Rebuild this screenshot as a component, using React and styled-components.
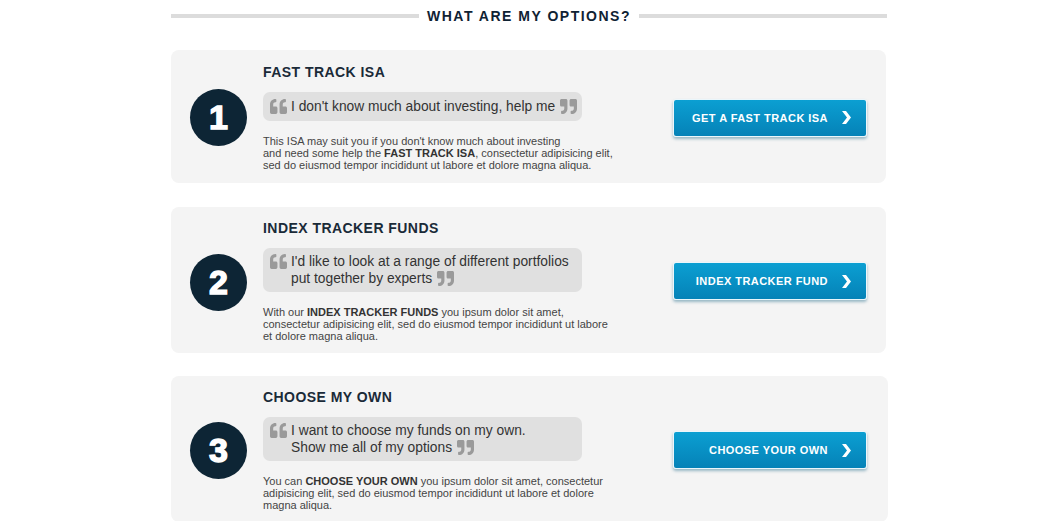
import React from 'react'
import styled, { createGlobalStyle } from 'styled-components'
import { FaQuoteLeft, FaQuoteRight } from 'react-icons/fa'

const GlobalStyle = createGlobalStyle`
body {
  margin: 0;
  background: #ffffff;
  font-family: "Liberation Sans", Arial, sans-serif;
}
`

const Page = styled.div`
width: 1058px;
padding: 7px 0 0 171px;
box-sizing: border-box;
`

const Heading = styled.div`
width: 716px;
display: flex;
align-items: center;
gap: 8px;
height: 18px;
margin-bottom: 25px;
`

const Rule = styled.div`
flex: 1;
height: 4px;
background: #dcdcdc;
`

const HeadingText = styled.h2`
margin: 0;
font-size: 14px;
font-weight: 700;
letter-spacing: 1.5px;
color: #0f2233;
white-space: nowrap;
`

const Card = styled.div`
width: ${p => p.$width || 715}px;
min-height: ${p => p.$height}px;
box-sizing: border-box;
background: #f4f4f4;
border-radius: 8px;
display: grid;
grid-template-columns: 92px 1fr auto;
align-items: center;
padding: 13px ${p => (p.$width ? p.$width - 696 : 19)}px 11px 0;
margin-bottom: ${p => p.$gap}px;
`

const Circle = styled.div`
width: 57px;
height: 57px;
border-radius: 50%;
background: #0d2535;
color: #ffffff;
display: flex;
align-items: center;
justify-content: center;
font-size: 34px;
font-weight: 700;
-webkit-text-stroke: 1.4px #ffffff;
justify-self: end;
margin-right: 16px;
margin-top: ${p => p.$shift || 0}px;
`

const Body = styled.div`
display: flex;
flex-direction: column;
`

const Title = styled.h3`
margin: 0 0 12px 0;
font-size: 14px;
font-weight: 700;
letter-spacing: 0.45px;
color: #1a2a38;
line-height: 16px;
`

const QuoteBox = styled.div`
width: 319px;
box-sizing: border-box;
background: #e0e0e0;
border-radius: 7px;
padding: ${p => (p.$lines > 1 ? '5px 8px 5px 7px' : '6px 8px 6px 7px')};
display: flex;
align-items: flex-start;
gap: 4px;
font-size: 13.8px;
line-height: 17px;
color: #333333;
margin-bottom: 14px;
white-space: nowrap;
`

const QuoteMark = styled.span`
color: #9a9a9a;
display: inline-flex;
align-items: center;
height: 17px;
font-size: 17px;
svg {
  width: 17px;
  height: 17px;
}
`

const CloseMark = styled(QuoteMark)`
margin-left: 5px;
vertical-align: top;
`

const QuoteText = styled.span``

const Desc = styled.p`
margin: 0;
font-size: 11px;
line-height: 12px;
color: #444444;
b {
  color: #333333;
}
`

const Button = styled.button`
width: 194px;
height: 38px;
box-sizing: border-box;
border: 1px solid #eaf6fb;
border-radius: 3px;
background: linear-gradient(#0b9fd2, #0582b7);
box-shadow: 0 2px 3px rgba(40, 110, 140, 0.45);
display: flex;
align-items: center;
justify-content: flex-end;
gap: 13px;
padding: 0 15px 0 0;
color: #ffffff;
font-family: "Liberation Sans", Arial, sans-serif;
font-size: 11px;
font-weight: 700;
letter-spacing: 0.45px;
cursor: pointer;
`

const Chevron = () => (
  <svg width="10" height="13" viewBox="0 0 10 13">
    <path d="M1 0 L5 0 L10 6.5 L5 13 L1 13 L6 6.5 Z" fill="#ffffff" />
  </svg>
)

const options = [
  {
    n: 1,
    title: 'FAST TRACK ISA',
    quote: ["I don't know much about investing, help me"],
    desc: (
      <>
        This ISA may suit you if you don't know much about investing
        <br />
        and need some help the <b>FAST TRACK ISA</b>, consectetur adipisicing elit,
        <br />
        sed do eiusmod tempor incididunt ut labore et dolore magna aliqua.
      </>
    ),
    button: 'GET A FAST TRACK ISA',
    height: 133,
    gap: 24,
  },
  {
    n: 2,
    title: 'INDEX TRACKER FUNDS',
    quote: ["I'd like to look at a range of different portfolios", 'put together by experts'],
    desc: (
      <>
        With our <b>INDEX TRACKER FUNDS</b> you ipsum dolor sit amet,
        <br />
        consectetur adipisicing elit, sed do eiusmod tempor incididunt ut labore
        <br />
        et dolore magna aliqua.
      </>
    ),
    button: 'INDEX TRACKER FUND',
    height: 146,
    gap: 23,
    shift: 2,
  },
  {
    n: 3,
    title: 'CHOOSE MY OWN',
    quote: ['I want to choose my funds on my own.', 'Show me all of my options'],
    desc: (
      <>
        You can <b>CHOOSE YOUR OWN</b> you ipsum dolor sit amet, consectetur
        <br />
        adipisicing elit, sed do eiusmod tempor incididunt ut labore et dolore
        <br />
        magna aliqua.
      </>
    ),
    button: 'CHOOSE YOUR OWN',
    height: 144,
    gap: 0,
    width: 717,
  },
]

export default function App() {
  return (
    <>
      <GlobalStyle />
      <Page>
        <Heading>
          <Rule />
          <HeadingText>WHAT ARE MY OPTIONS?</HeadingText>
          <Rule />
        </Heading>
        {options.map(o => (
          <Card key={o.n} $height={o.height} $gap={o.gap} $width={o.width}>
            <Circle $shift={o.shift}>{o.n}</Circle>
            <Body>
              <Title>{o.title}</Title>
              <QuoteBox $lines={o.quote.length}>
                <QuoteMark><FaQuoteLeft /></QuoteMark>
                <QuoteText>
                  {o.quote.map((line, i) => (
                    <React.Fragment key={i}>
                      {i > 0 && <br />}
                      {line}
                    </React.Fragment>
                  ))}
                  <CloseMark><FaQuoteRight /></CloseMark>
                </QuoteText>
              </QuoteBox>
              <Desc>{o.desc}</Desc>
            </Body>
            <Button>
              {o.button}
              <Chevron />
            </Button>
          </Card>
        ))}
      </Page>
    </>
  )
}
